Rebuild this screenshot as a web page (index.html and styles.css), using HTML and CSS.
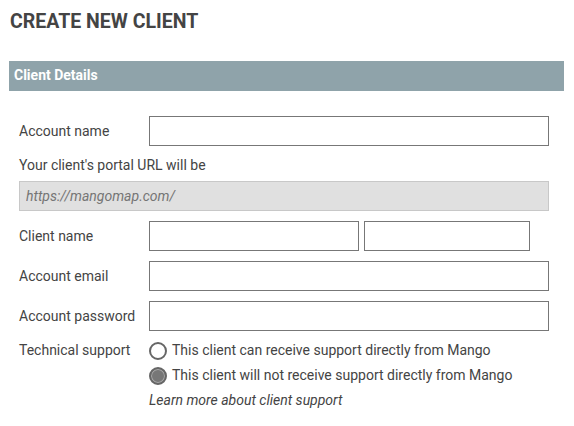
FILE: index.html
```html
<!DOCTYPE html>
<html lang="en">
<head>
    <meta charset="UTF-8">
    <meta name="viewport" content="width=device-width, initial-scale=1.0">
    <title>Create new client</title>
    <link rel="stylesheet" href="styles.css">
</head>
<body>

<div class="page">
    <h1 class="page-title">CREATE NEW CLIENT</h1>

    <div class="panel">
        <div class="panel-heading">Client Details</div>
        <div class="panel-body">
            <div class="form-row">
                <label for="account-name">Account name</label>
                <input type="text" id="account-name" class="field">
            </div>

            <p class="hint">Your client's portal URL will be</p>
            <input type="text" class="field url" placeholder="https://mangomap.com/" disabled>

            <div class="form-row">
                <label for="first-name">Client name</label>
                <div class="name-fields">
                    <input type="text" id="first-name" class="field first">
                    <input type="text" class="field last">
                </div>
            </div>

            <div class="form-row">
                <label for="email">Account email</label>
                <input type="email" id="email" class="field">
            </div>

            <div class="form-row">
                <label for="password">Account password</label>
                <input type="password" id="password" class="field">
            </div>

            <div class="support-row">
                <span class="row-label">Technical support</span>
                <div class="support-options">
                    <label class="radio">
                        <input type="radio" name="support" value="direct">
                        <span class="dot"></span>
                        This client can receive support directly from Mango
                    </label>
                    <label class="radio">
                        <input type="radio" name="support" value="none" checked>
                        <span class="dot"></span>
                        This client will not receive support directly from Mango
                    </label>
                    <a href="#" class="learn-more">Learn more about client support</a>
                </div>
            </div>
        </div>
    </div>
</div>

</body>
</html>
```

FILE: styles.css
```css
body {
    font-family: Roboto, Arial, sans-serif;
    font-size: 14px;
    color: #444;
    margin: 0;
    padding: 0;
}

.page {
    padding: 0 10px 0 9px;
}

.page-title {
    margin: 0;
    padding: 11px 0 0 1px;
    font-size: 19.5px;
    font-weight: bold;
    line-height: 22px;
    color: #444;
}

.panel {
    margin-top: 28px;
}

.panel-heading {
    background-color: #8fa3aa;
    color: white;
    font-weight: bold;
    font-size: 14px;
    height: 30px;
    line-height: 28px;
    padding: 0 5px;
}

.panel-body {
    padding: 25px 15px 0 10px;
}

.form-row {
    display: flex;
    align-items: center;
    margin-bottom: 10px;
}

.form-row label,
.row-label {
    width: 130px;
    flex-shrink: 0;
    color: #444;
}

.field {
    box-sizing: border-box;
    width: 400px;
    height: 30px;
    border: 1px solid #777;
    border-radius: 0;
    padding: 0 6px;
    font-family: inherit;
    font-size: 14px;
    background: white;
    margin: 0;
}

.name-fields {
    display: flex;
    gap: 5px;
}

.name-fields .first {
    width: 210px;
}

.name-fields .last {
    width: 166px;
}

.hint {
    margin: 0 0 7px;
    line-height: 18px;
    color: #444;
}

.field.url {
    display: block;
    width: 530px;
    background-color: #e0e0e0;
    border-color: #c8c8c8;
    margin-bottom: 10px;
}

.field.url::placeholder {
    font-style: italic;
    color: #757575;
}

.support-row {
    display: flex;
    margin-top: -3px;
}

.support-row .row-label {
    line-height: 25px;
}

.support-options {
    display: flex;
    flex-direction: column;
}

.radio {
    display: flex;
    align-items: center;
    gap: 5px;
    line-height: 25px;
    color: #444;
    cursor: pointer;
}

.radio input {
    display: none;
}

.radio .dot {
    box-sizing: border-box;
    width: 18px;
    height: 18px;
    border: 2px solid #666;
    border-radius: 50%;
    background: white;
}

.radio input:checked + .dot {
    background: #777;
    box-shadow: inset 0 0 0 1px #aaa;
}

.learn-more {
    line-height: 25px;
    font-style: italic;
    color: #444;
    text-decoration: none;
}
```
